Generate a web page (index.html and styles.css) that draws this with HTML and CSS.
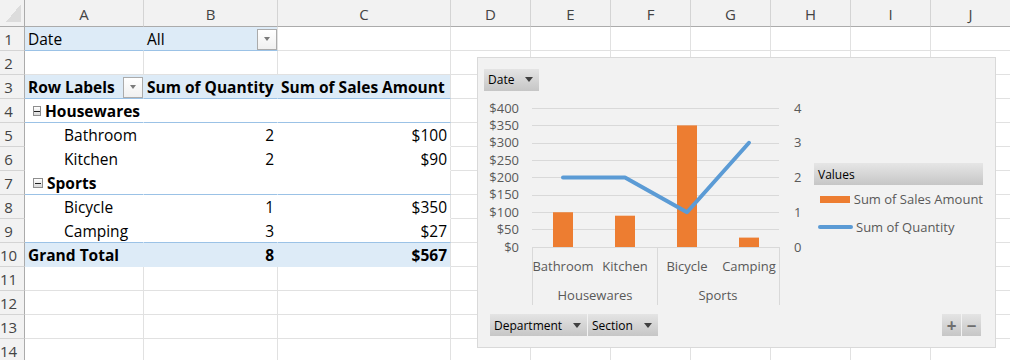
FILE: index.html
```html
<!DOCTYPE html>
<html lang="en">
<head>
  <meta charset="UTF-8">
  <title>Pivot Chart</title>
  <link rel="stylesheet" href="styles.css">
</head>
<body>

<div class="sheet">
  <div class="row head">
    <div class="corner"><span class="corner-tri"></span></div>
    <div class="ch">A</div><div class="ch">B</div><div class="ch">C</div><div class="ch">D</div>
    <div class="ch">E</div><div class="ch">F</div><div class="ch">G</div><div class="ch">H</div>
    <div class="ch">I</div><div class="ch">J</div>
  </div>

  <div class="row">
    <div class="rh">1</div>
    <div class="c fill line">Date</div>
    <div class="c fill line end dd-cell">All<span class="dd"><i></i></span></div>
    <div class="c"></div><div class="c"></div><div class="c"></div><div class="c"></div>
    <div class="c"></div><div class="c"></div><div class="c"></div><div class="c"></div>
  </div>

  <div class="row">
    <div class="rh">2</div>
    <div class="c"></div><div class="c"></div><div class="c"></div><div class="c"></div>
    <div class="c"></div><div class="c"></div><div class="c"></div><div class="c"></div>
    <div class="c"></div><div class="c"></div>
  </div>

  <div class="row">
    <div class="rh">3</div>
    <div class="c fill line b dd-cell">Row Labels<span class="dd"><i></i></span></div>
    <div class="c fill line b">Sum of Quantity</div>
    <div class="c fill line b end">Sum of Sales Amount</div>
    <div class="c"></div><div class="c"></div><div class="c"></div><div class="c"></div>
    <div class="c"></div><div class="c"></div><div class="c"></div>
  </div>

  <div class="row">
    <div class="rh">4</div>
    <div class="c pw line b grp"><span class="tog"></span>Housewares</div>
    <div class="c pw line"></div>
    <div class="c pw line end"></div>
    <div class="c"></div><div class="c"></div><div class="c"></div><div class="c"></div>
    <div class="c"></div><div class="c"></div><div class="c"></div>
  </div>

  <div class="row">
    <div class="rh">5</div>
    <div class="c pw ind">Bathroom</div>
    <div class="c pw num">2</div>
    <div class="c pw num end">$100</div>
    <div class="c"></div><div class="c"></div><div class="c"></div><div class="c"></div>
    <div class="c"></div><div class="c"></div><div class="c"></div>
  </div>

  <div class="row">
    <div class="rh">6</div>
    <div class="c pw ind">Kitchen</div>
    <div class="c pw num">2</div>
    <div class="c pw num end">$90</div>
    <div class="c"></div><div class="c"></div><div class="c"></div><div class="c"></div>
    <div class="c"></div><div class="c"></div><div class="c"></div>
  </div>

  <div class="row">
    <div class="rh">7</div>
    <div class="c pw line b grp"><span class="tog"></span>Sports</div>
    <div class="c pw line"></div>
    <div class="c pw line end"></div>
    <div class="c"></div><div class="c"></div><div class="c"></div><div class="c"></div>
    <div class="c"></div><div class="c"></div><div class="c"></div>
  </div>

  <div class="row">
    <div class="rh">8</div>
    <div class="c pw ind">Bicycle</div>
    <div class="c pw num">1</div>
    <div class="c pw num end">$350</div>
    <div class="c"></div><div class="c"></div><div class="c"></div><div class="c"></div>
    <div class="c"></div><div class="c"></div><div class="c"></div>
  </div>

  <div class="row">
    <div class="rh">9</div>
    <div class="c pw line ind">Camping</div>
    <div class="c pw line num">3</div>
    <div class="c pw line num end">$27</div>
    <div class="c"></div><div class="c"></div><div class="c"></div><div class="c"></div>
    <div class="c"></div><div class="c"></div><div class="c"></div>
  </div>

  <div class="row">
    <div class="rh">10</div>
    <div class="c fill b total">Grand Total</div>
    <div class="c fill b total num">8</div>
    <div class="c fill b total num end">$567</div>
    <div class="c"></div><div class="c"></div><div class="c"></div><div class="c"></div>
    <div class="c"></div><div class="c"></div><div class="c"></div>
  </div>

  <div class="row">
    <div class="rh">11</div>
    <div class="c"></div><div class="c"></div><div class="c"></div><div class="c"></div>
    <div class="c"></div><div class="c"></div><div class="c"></div><div class="c"></div>
    <div class="c"></div><div class="c"></div>
  </div>
  <div class="row">
    <div class="rh">12</div>
    <div class="c"></div><div class="c"></div><div class="c"></div><div class="c"></div>
    <div class="c"></div><div class="c"></div><div class="c"></div><div class="c"></div>
    <div class="c"></div><div class="c"></div>
  </div>
  <div class="row">
    <div class="rh">13</div>
    <div class="c"></div><div class="c"></div><div class="c"></div><div class="c"></div>
    <div class="c"></div><div class="c"></div><div class="c"></div><div class="c"></div>
    <div class="c"></div><div class="c"></div>
  </div>
  <div class="row">
    <div class="rh">14</div>
    <div class="c"></div><div class="c"></div><div class="c"></div><div class="c"></div>
    <div class="c"></div><div class="c"></div><div class="c"></div><div class="c"></div>
    <div class="c"></div><div class="c"></div>
  </div>

  <!-- pivot chart floating over the sheet -->
  <div class="chart">
    <div class="chart-head">
      <span class="fbtn date-btn">Date<i class="arrow"></i></span>
    </div>

    <div class="chart-body">
      <svg class="plot" width="329" height="215" viewBox="0 0 329 215">
        <g class="grid">
          <line x1="54" y1="11.5" x2="301" y2="11.5"/>
          <line x1="54" y1="28.5" x2="301" y2="28.5"/>
          <line x1="54" y1="46.5" x2="301" y2="46.5"/>
          <line x1="54" y1="63.5" x2="301" y2="63.5"/>
          <line x1="54" y1="80.5" x2="301" y2="80.5"/>
          <line x1="54" y1="98.5" x2="301" y2="98.5"/>
          <line x1="54" y1="115.5" x2="301" y2="115.5"/>
          <line x1="54" y1="132.5" x2="301" y2="132.5"/>
        </g>
        <g class="ylab">
          <text x="41" y="15.5">$400</text>
          <text x="41" y="32.5">$350</text>
          <text x="41" y="50">$300</text>
          <text x="41" y="67.5">$250</text>
          <text x="41" y="85">$200</text>
          <text x="41" y="102">$150</text>
          <text x="41" y="119.5">$100</text>
          <text x="41" y="137">$50</text>
          <text x="41" y="154.5">$0</text>
        </g>
        <g class="ylab2">
          <text x="316" y="15.5">4</text>
          <text x="316" y="50">3</text>
          <text x="316" y="85">2</text>
          <text x="316" y="119.5">1</text>
          <text x="316" y="154.5">0</text>
        </g>
        <g class="bars">
          <rect x="75" y="115.25" width="20" height="34.75"/>
          <rect x="137" y="118.7" width="20" height="31.3"/>
          <rect x="199" y="28.4" width="20" height="121.6"/>
          <rect x="261" y="140.6" width="20" height="9.4"/>
        </g>
        <polyline class="qty" points="85,80.5 147,80.5 209,115.25 271,45.75"/>
        <g class="axis">
          <line x1="54" y1="150.5" x2="302" y2="150.5"/>
          <line x1="54.5" y1="150" x2="54.5" y2="208"/>
          <line x1="179.5" y1="150" x2="179.5" y2="208"/>
          <line x1="301.5" y1="150" x2="301.5" y2="208"/>
        </g>
        <g class="xlab">
          <text x="85" y="174">Bathroom</text>
          <text x="147" y="174">Kitchen</text>
          <text x="209" y="174">Bicycle</text>
          <text x="271" y="174">Camping</text>
          <text x="117" y="202.5">Housewares</text>
          <text x="240" y="202.5">Sports</text>
        </g>
      </svg>

      <div class="legend">
        <div class="legend-title">Values</div>
        <div class="legend-item"><span class="sw-bar"></span>Sum of Sales Amount</div>
        <div class="legend-item"><span class="sw-line"></span>Sum of Quantity</div>
      </div>
    </div>

    <div class="chart-foot">
      <span class="fbtn dept-btn">Department<i class="arrow"></i></span>
      <span class="fbtn sect-btn">Section<i class="arrow"></i></span>
      <span class="zoom-btns">
        <span class="zbtn">+</span><span class="zbtn">&minus;</span>
      </span>
    </div>
  </div>
</div>

</body>
</html>
```

FILE: styles.css
```css
body { margin: 0; background: #fff; font-family: "Open Sans", sans-serif; }

.sheet { position: relative; width: 1010px; height: 360px; overflow: hidden; }

.row { display: grid; grid-template-columns: 25px 119px 134px 173px repeat(7, 80px); height: 24px; }
.row.head { height: 27px; }

/* headers */
.corner { background: #f2f2f2; border-right: 1px solid #ababab; border-bottom: 1px solid #ababab; box-sizing: border-box; display: flex; align-items: flex-end; justify-content: flex-end; padding: 0 3px 4px 0; }
.corner-tri { width: 15px; height: 18px; background: linear-gradient(to bottom right, transparent 50%, #dcdcdc 50%); }
.ch { background: #f2f2f2; border-right: 1px solid #d4d4d4; border-bottom: 1px solid #ababab; box-sizing: border-box; display: flex; align-items: center; justify-content: center; font-size: 15px; color: #444; padding-top: 1px; }
.rh { background: #f2f2f2; border-right: 1px solid #ababab; border-bottom: 1px solid #d4d4d4; box-sizing: border-box; display: flex; align-items: center; justify-content: center; padding: 1px 7px 0 0; font-size: 15px; color: #444; line-height: 20px; }

/* cells */
.c { box-sizing: border-box; border-right: 1px solid #e1e1e1; border-bottom: 1px solid #e1e1e1; display: flex; align-items: center; padding: 1px 3px 0; font-size: 15.5px; line-height: 20px; color: #000; white-space: nowrap; min-width: 0; }
.c.fill { background: #ddebf7; border-right-color: #ddebf7; border-bottom-color: #ddebf7; }
.c.pw { background: #fff; border-right-color: #fff; border-bottom-color: #fff; }
.c.line { border-bottom-color: #9bc2e6; }
.c.end { border-right-color: #e1e1e1; }
.c.b { font-weight: 700; }
.c.num { justify-content: flex-end; }
.c.ind { padding-left: 39px; }
.c.grp { padding-left: 8px; }
.c.dd-cell { padding-right: 0; }

.dd { margin-left: auto; width: 20px; height: 21px; box-sizing: border-box; border: 1px solid #ababab; background: linear-gradient(#ffffff, #f0f0f0); display: flex; align-items: center; justify-content: center; }
.dd i { width: 0; height: 0; border-left: 3.5px solid transparent; border-right: 3.5px solid transparent; border-top: 4px solid #7a7a7a; }

.tog { width: 10px; height: 10px; box-sizing: border-box; border: 1px solid #8e8e8e; background: linear-gradient(#ffffff, #d9d9d9); margin-right: 4px; display: flex; align-items: center; justify-content: center; }
.tog::after { content: ""; width: 6px; height: 1px; background: #222; }

/* chart */
.chart { position: absolute; left: 477px; top: 57px; width: 519px; height: 291px; box-sizing: border-box; border: 1px solid #d9d9d9; background: #f2f2f2; display: flex; flex-direction: column; }
.chart-head { height: 39px; box-sizing: border-box; padding: 9px 0 0 6px; }
.chart-body { height: 215px; display: flex; }
.chart-foot { display: flex; margin-top: 2px; padding: 0 14px 0 12px; gap: 1px; }

.fbtn { height: 22px; box-sizing: border-box; display: inline-flex; align-items: center; font-size: 12px; color: #000; background: linear-gradient(#e4e4e4, #c6c6c6); padding: 0 6px 0 4px; }
.fbtn .arrow { width: 0; height: 0; border-left: 4px solid transparent; border-right: 4px solid transparent; border-top: 5px solid #404040; margin-left: auto; }
.date-btn { width: 55px; }
.dept-btn { width: 97px; }
.sect-btn { width: 70px; }

.zoom-btns { margin-left: auto; display: flex; gap: 1px; }
.zbtn { width: 19px; height: 22px; display: flex; align-items: center; justify-content: center; background: linear-gradient(#e4e4e4, #c6c6c6); color: #6e6e6e; font-size: 17px; font-weight: 700; line-height: 1; }

.plot { display: block; flex: none; }
.plot .grid line, .plot .axis line { stroke: #d9d9d9; stroke-width: 1; }
.plot text { font-family: "Open Sans", sans-serif; font-size: 13px; fill: #595959; }
.plot .ylab text { text-anchor: end; }
.plot .xlab text { text-anchor: middle; }
.plot .bars rect { fill: #ed7d31; }
.plot .qty { fill: none; stroke: #5b9bd5; stroke-width: 4; stroke-linejoin: round; stroke-linecap: round; }

.legend { margin: 66px 0 0 7px; width: 169px; }
.legend-title { height: 22px; box-sizing: border-box; padding: 0 4px; display: flex; align-items: center; font-size: 12px; color: #000; background: linear-gradient(#e6e6e6, #c6c6c6); }
.legend-item { height: 28px; display: flex; align-items: center; font-size: 13px; color: #595959; white-space: nowrap; }
.sw-bar { width: 32px; height: 7px; background: #ed7d31; margin: 0 4px 0 6px; }
.sw-line { width: 35px; height: 4px; border-radius: 2px; background: #5b9bd5; margin: 0 3px 0 4px; }
```
